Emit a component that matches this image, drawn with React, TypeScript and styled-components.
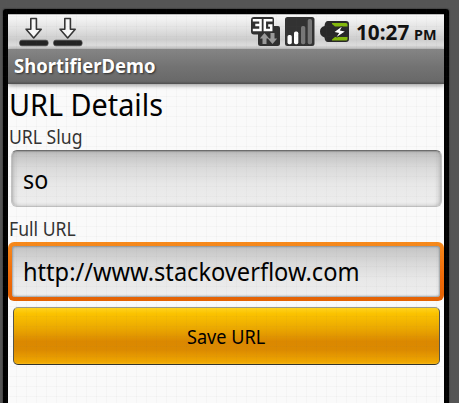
import React from "react";
import styled, { createGlobalStyle } from "styled-components";

const GlobalStyle = createGlobalStyle`
  * { box-sizing: border-box; }
  html, body { margin: 0; height: 100%; overflow: hidden; }
  body { background: #555; font-family: "Noto Sans", "Open Sans", sans-serif; color: #000; }
`;

const Backdrop = styled.div`
  width: 459px;
  height: 403px;
  padding: 9px 10px 0 3px;
  background: #555;
  overflow: hidden;
  position: relative;
  &::after {
    content: "";
    position: absolute;
    inset: 0;
    pointer-events: none;
    background-image:
      linear-gradient(90deg, rgba(110, 110, 110, 0.035) 1px, transparent 1px),
      linear-gradient(rgba(110, 110, 110, 0.035) 1px, transparent 1px);
    background-size: 10px 10px;
    background-position: 6px 6px;
  }
`;

const Device = styled.div`
  height: 420px;
  border: 5px solid #000;
  border-radius: 3px;
  box-shadow: 0 0 1px 1px #454545;
  background: #fafafa;
`;

const StatusBar = styled.div`
  height: 35px;
  display: flex;
  align-items: flex-start;
  justify-content: space-between;
  padding: 0 8px 0 11px;
  background: linear-gradient(#f8f8f8, #e2e2e2 40%, #cdcdcd 72%, #dedede 90%, #d2d2d2);
  border-top: 1px solid #bbb;
`;

const Group = styled.div<{ $gap: number }>`
  display: flex;
  gap: ${(p) => p.$gap}px;
`;

const Label = styled.span<{ $size: number; $line: number; $scale?: number; $color?: string; $bold?: boolean }>`
  display: inline-block;
  white-space: pre;
  font-size: ${(p) => p.$size}px;
  line-height: ${(p) => p.$line}px;
  font-weight: ${(p) => (p.$bold ? 700 : 400)};
  color: ${(p) => p.$color ?? "#000"};
  transform: scaleX(${(p) => p.$scale ?? 1});
  transform-origin: 0 0;
`;

const Clock = styled.div`
  display: flex;
  align-items: baseline;
  width: 80px;
  gap: 2.5px;
  margin-left: 3px;
`;

const TitleBar = styled.div`
  height: 35px;
  padding: 4px 0 0 6px;
  background: linear-gradient(#858585, #737373 50%, #696969 92%, #4e4e4e);
  box-shadow: 0 1px 5px rgba(0, 0, 0, 0.45);
  text-shadow: 1px 1px 2px rgba(0, 0, 0, 0.6);
`;

const Content = styled.main`
  display: flex;
  flex-direction: column;
`;

const Heading = styled.div`
  height: 42px;
  padding-left: 0.5px;
`;

const Caption = styled.div<{ $height: number }>`
  height: ${(p) => p.$height}px;
  padding-left: 0.5px;
`;

const Field = styled.div`
  height: 57px;
  margin: 0 2px 0 3px;
  padding: 9px 0 0 11px;
  border: 1px solid #c2c2c2;
  border-top: 1px solid #6d6d6d;
  border-radius: 6px;
  background: linear-gradient(#bfbfbf, #dadada 30%, #e8e8e8 62%, #eeeeee);
  box-shadow: inset 0 1px 1px #9a9a9a, inset 3px 0 5px -2px #aaa, inset -3px 0 5px -2px #aaa;
`;

const FocusRing = styled.div`
  height: 59px;
  padding: 4px;
  border-radius: 6px;
  background: linear-gradient(#f68a1c, #f06a08 60%, #e36203);
`;

const FocusedField = styled.div`
  height: 51px;
  padding: 6px 0 0 11px;
  border-radius: 3px;
  background: linear-gradient(#c3c3c3, #dadada 35%, #e8e8e8 65%, #eeeeee);
  box-shadow: inset 0 0 2px 1px rgba(120, 130, 135, 0.7);
`;

const SaveButton = styled.button`
  display: flex;
  justify-content: flex-start;
  align-items: flex-start;
  height: 58px;
  margin: 6px 4px 0 5px;
  padding: 15px 0 0 172.5px;
  border: 1px solid #55554a;
  border-top-color: #98988c;
  border-bottom-color: #33332c;
  border-radius: 5px;
  background: linear-gradient(#ffd21d, #fbc300 10%, #ecaa00 35%, #db8800 60%, #dc8a00 75%, #f0a800 97%, #f5b920);
  font: inherit;
`;

const Download = () => (
  <svg width="30" height="34" viewBox="0 0 30 34">
    <path d="M11.8 3.500h5.600v10.700h4.800l-7.500 8.800-7.600-8.800h4.700z" fill="#f7f7f7" stroke="#353535" strokeWidth="1.6" strokeLinejoin="round" />
    <rect x="0.6" y="25.2" width="28.500" height="5.600" rx="2.2" fill="#242424" stroke="#454545" strokeWidth=".7" />
  </svg>
);

const Network = () => (
  <svg width="30" height="34" viewBox="0 0 30 34">
    <path d="M3 2h18a2 2 0 012 2v7h4a2 2 0 012 2v15.500a2.500 2.500 0 01-2.500 2.500h-17A2.500 2.500 0 017 28.500V19.500H3a3 3 0 01-3-3V5a3 3 0 013-3z" fill="#303030" />
    <path d="M1.800 5.200H9.500v9.800H1.800M4.300 10H9.500" fill="none" stroke="#fff" strokeWidth="2.500" />
    <path d="M21.500 5.200h-7.700v9.800h6.400v-4.500h-3" fill="none" stroke="#fff" strokeWidth="2.500" />
    <path d="M13.500 18l4.700 5.500h-2.700V29h-4v-5.500H8.800zM19.500 18h4v5.500h2.700L21.500 29l-4.700-5.500h2.700z" fill="#999" />
  </svg>
);

const Signal = () => (
  <svg width="30" height="34" viewBox="0 0 30 34">
    <rect width="29.500" height="29" y="2" rx="2.500" fill="#323232" />
    <rect x="2.500" y="20" width="4.300" height="9.300" rx="1.700" fill="#fff" />
    <rect x="9" y="16.500" width="4.300" height="12.800" rx="1.700" fill="#fff" />
    <rect x="16" y="11" width="4.300" height="18.300" rx="1.700" fill="#777" />
    <rect x="22.700" y="4" width="4.300" height="25.300" rx="1.700" fill="#777" />
  </svg>
);

const Battery = () => (
  <svg width="29" height="34" viewBox="0 0 29 34">
    <path d="M8 6h18a3 3 0 013 3v15a3 3 0 01-3 3H8q-3 0-3.500-4.500Q0 21 0 16.500T4.500 11Q5 6 8 6z" fill="#292929" />
    <path d="M12 8h14a1.500 1.500 0 011.500 1.500V11.500H15l-3-2.500zM12 25.500h14a1.500 1.500 0 001.500-1.500V22H15l-3 2.500z" fill="#83b80b" />
    <path d="M22 11.500L14.500 17l4.700 1-2.700 4 8.300-5.500-5-1z" fill="#fff" stroke="#222" strokeWidth="1.500" paintOrder="stroke" />
  </svg>
);

export default function App() {
  return (
    <>
      <GlobalStyle />
      <Backdrop>
        <Device>
          <StatusBar>
            <Group $gap={4}>
              <Download />
              <Download />
            </Group>
            <Group $gap={4.5}>
              <Network />
              <Signal />
              <Battery />
              <Clock>
                <Label $size={21.5} $line={34} $scale={0.965} $bold $color="#111">10:27</Label>
                <Label $size={15} $line={34} $scale={0.96} $bold $color="#111">PM</Label>
              </Clock>
            </Group>
          </StatusBar>
          <TitleBar>
            <Label $size={19} $line={27} $scale={0.972} $bold $color="#fff">ShortifierDemo</Label>
          </TitleBar>
          <Content>
            <Heading><Label $size={30} $line={41} $scale={0.96}>URL Details</Label></Heading>
            <Caption $height={24}><Label $size={20} $line={21} $scale={0.88} $color="#333">URL Slug</Label></Caption>
            <Field><Label $size={25} $line={38} $scale={0.93}>so</Label></Field>
            <Caption $height={35}><Label $size={20} $line={43} $scale={0.88} $color="#333">Full URL</Label></Caption>
            <FocusRing>
              <FocusedField><Label $size={25} $line={38} $scale={0.944}>http://www.stackoverflow.com</Label></FocusedField>
            </FocusRing>
            <SaveButton><Label $size={20} $line={28} $scale={0.905}>Save URL</Label></SaveButton>
          </Content>
        </Device>
      </Backdrop>
    </>
  );
}
